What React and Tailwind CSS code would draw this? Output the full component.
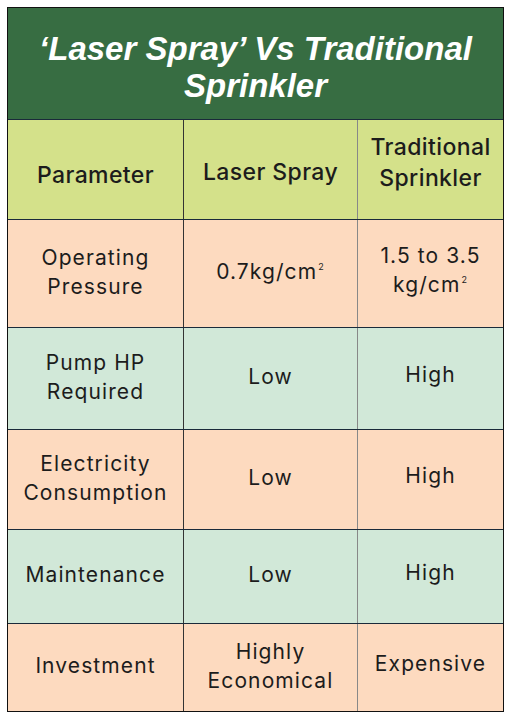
const rows = [
  { p: ["Operating", "Pressure"], a: "0.7kg/cm", aSup: true, b: ["1.5 to 3.5", "kg/cm"], bSup: true, bg: "bg-[#fddabf]", h: "h-[108px]" },
  { p: ["Pump HP", "Required"], a: "Low", b: ["High"], bg: "bg-[#d1e8d8]", h: "h-[102px]" },
  { p: ["Electricity", "Consumption"], a: "Low", b: ["High"], bg: "bg-[#fddabf]", h: "h-[100px]" },
  { p: ["Maintenance"], a: "Low", b: ["High"], bg: "bg-[#d1e8d8]", h: "h-[94px]" },
  { p: ["Investment"], a: ["Highly", "Economical"], b: ["Expensive"], bg: "bg-[#fddabf]", h: "h-[88px]" },
];

function Lines({ lines, sup }) {
  const arr = Array.isArray(lines) ? lines : [lines];
  return (
    <div className="flex flex-col items-center leading-[29px]">
      {arr.map((l, i) => (
        <span key={i}>
          {l}
          {sup && i === arr.length - 1 && (
            <sup className="text-[9px] -top-[9px] ml-[1px]">2</sup>
          )}
        </span>
      ))}
    </div>
  );
}

export default function App() {
  return (
    <div className="w-[512px] h-[719px] bg-white p-[7px] pr-[8px] pb-[9px]">
      <div className="border-[1.5px] border-[#111] w-[497px]">
        <div className="h-[111px] bg-[#376d42] flex flex-col items-center justify-center text-white font-bold italic text-[33px] leading-[37px] pt-[6px] font-['Liberation_Sans',Arial,sans-serif]">
          <span>‘Laser Spray’ Vs Traditional</span>
          <span>Sprinkler</span>
        </div>
        <div className="grid grid-cols-[176px_174px_1fr] h-[100px] bg-[#d4e18a] border-t border-[#1a2a3a] font-['Inter',sans-serif] font-medium text-[23px] tracking-[0.4px] text-[#1c1c1c] text-center">
          <div className="flex items-center justify-center border-r border-[#333] pt-[12px]">Parameter</div>
          <div className="flex items-center justify-center border-r border-[#888] pt-[6px]">Laser Spray</div>
          <div className="flex flex-col items-center justify-center leading-[31px] pb-[14px]">
            <span>Traditional</span>
            <span>Sprinkler</span>
          </div>
        </div>
        {rows.map((r, i) => (
          <div
            key={i}
            className={`grid grid-cols-[176px_174px_1fr] ${r.h} ${r.bg} border-t border-[#1a2a3a] font-['Inter',sans-serif] text-[21px] tracking-[1.1px] text-[#1c1c1c] text-center`}
          >
            <div className="flex items-center justify-center border-r border-[#333] pb-[4px]">
              <Lines lines={r.p} />
            </div>
            <div className="flex items-center justify-center border-r border-[#888] pb-[4px]">
              <Lines lines={r.a} sup={r.aSup} />
            </div>
            <div className="flex items-center justify-center pb-[8px]">
              <Lines lines={r.b} sup={r.bSup} />
            </div>
          </div>
        ))}
      </div>
    </div>
  );
}
